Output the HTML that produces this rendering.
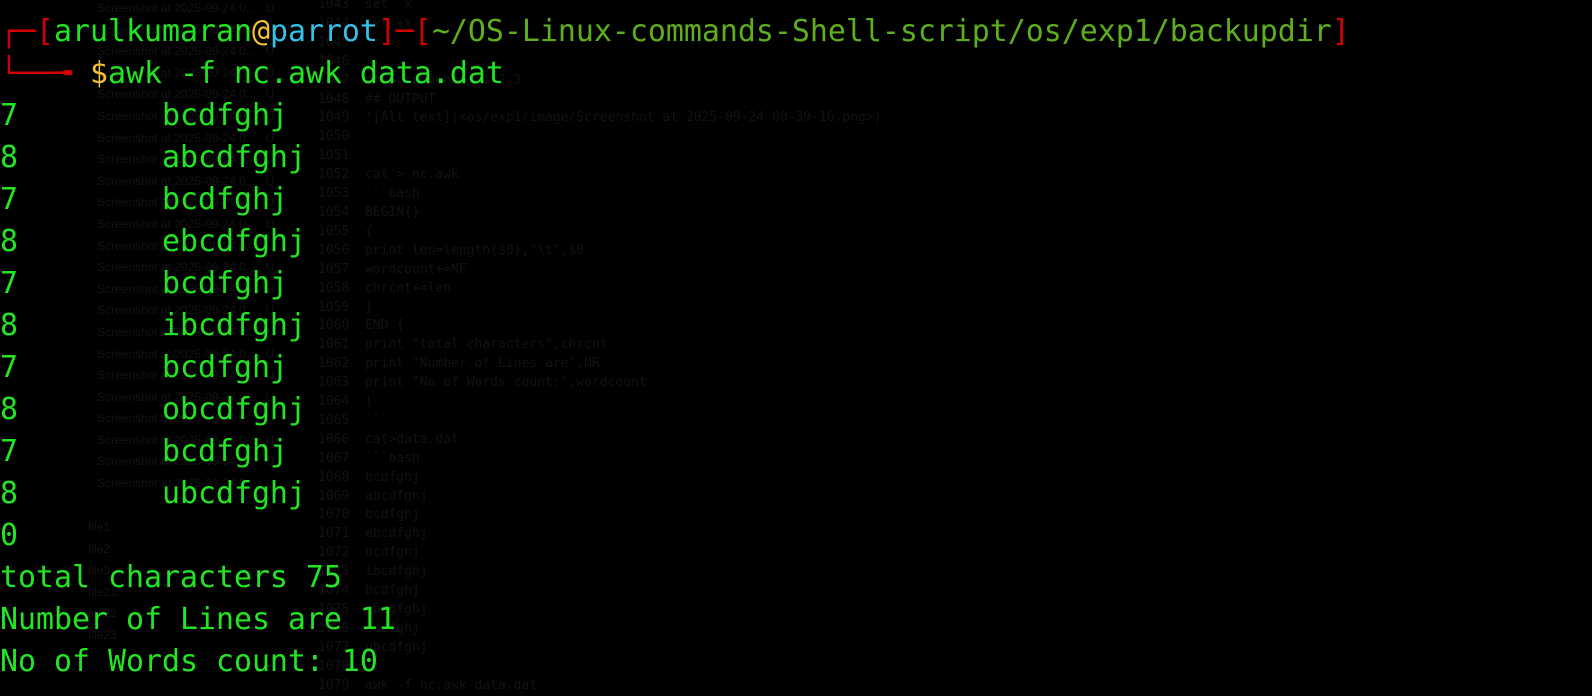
<!DOCTYPE html>
<html><head><meta charset="utf-8"><style>
html,body{margin:0;padding:0;background:#000;width:1592px;height:686px;overflow:hidden}
.bg{position:absolute;font-family:"DejaVu Sans Mono","Liberation Mono",monospace;font-size:13px;color:#121212;white-space:pre}
.fl{position:absolute;font-family:"Liberation Sans",sans-serif;font-size:12px;color:#131313;white-space:pre}
.l{position:absolute;left:0;font-family:"DejaVu Sans Mono","Liberation Mono",monospace;font-size:29.9px;line-height:38px;color:#22e622;white-space:pre}
.r{color:#d40000}.c{color:#35c2e8}.y{color:#f2c230}.p{color:#5fae1c}
</style></head><body>
<div class="fl" style="left:97px;top:-2px;line-height:21.6px">Screenshot at 2025-09-24 0...   U
Screenshot at 2025-09-24 0...   U
Screenshot at 2025-09-24 0...   U
Screenshot at 2025-09-24 0...   U
Screenshot at 2025-09-24 0...   U
Screenshot at 2025-09-24 0...   U
Screenshot at 2025-09-24 0...   U
Screenshot at 2025-09-24 0...   U
Screenshot at 2025-09-24 0...   U
Screenshot at 2025-09-24 0...   U
Screenshot at 2025-09-24 0...   U
Screenshot at 2025-09-24 0...   U
Screenshot at 2025-09-24 0...   U
Screenshot at 2025-09-24 0...   U
Screenshot at 2025-09-24 0...   U
Screenshot at 2025-09-24 0...   U
Screenshot at 2025-09-24 0...   U
Screenshot at 2025-09-24 0...   U
Screenshot at 2025-09-24 0...   U
Screenshot at 2025-09-24 0...   U
Screenshot at 2025-09-24 0...   U
Screenshot at 2025-09-24 0...   U
Screenshot at 2025-09-24 0...   U
</div>
<div class="fl" style="left:88px;top:517px;line-height:21.6px">file1
file2
file3
file21
file22
file23
</div>
<div class="bg" style="left:318px;top:-4px;line-height:18.9px">1043  set -x
1044  set +x
1045
1046
1047  ## Screenshots 1 2 3
1048  ## OUTPUT
1049  ![Alt text](&lt;os/exp1/image/Screenshot at 2025-09-24 08-39-16.png&gt;)
1050
1051
1052  cat &gt; nc.awk
1053  &#96;&#96;&#96;bash
1054  BEGIN{}
1055  {
1056  print len=length($0),"\t",$0
1057  wordcount+=NF
1058  chrcnt+=len
1059  }
1060  END {
1061  print "total characters",chrcnt
1062  print "Number of Lines are",NR
1063  print "No of Words count:",wordcount
1064  }
1065  &#96;&#96;&#96;
1066  cat&gt;data.dat
1067  &#96;&#96;&#96;bash
1068  bcdfghj
1069  abcdfghj
1070  bcdfghj
1071  ebcdfghj
1072  bcdfghj
1073  ibcdfghj
1074  bcdfghj
1075  obcdfghj
1076  bcdfghj
1077  ubcdfghj
1078  &#96;&#96;&#96;
1079  awk -f nc.awk data.dat</div>
<div class="l" style="top:12.5px"><span class="r">┌─[</span>arulkumaran<span class="y">@</span><span class="c">parrot</span><span class="r">]─[</span><span class="p">~/OS-Linux-commands-Shell-script/os/exp1/backupdir</span><span class="r">]</span></div>
<div class="l" style="top:54.5px"><span class="r">└──╼ </span><span class="y">$</span>awk -f nc.awk data.dat</div>
<div class="l" style="top:96.5px">7        bcdfghj</div>
<div class="l" style="top:138.5px">8        abcdfghj</div>
<div class="l" style="top:180.5px">7        bcdfghj</div>
<div class="l" style="top:222.5px">8        ebcdfghj</div>
<div class="l" style="top:264.5px">7        bcdfghj</div>
<div class="l" style="top:306.5px">8        ibcdfghj</div>
<div class="l" style="top:348.5px">7        bcdfghj</div>
<div class="l" style="top:390.5px">8        obcdfghj</div>
<div class="l" style="top:432.5px">7        bcdfghj</div>
<div class="l" style="top:474.5px">8        ubcdfghj</div>
<div class="l" style="top:516.5px">0</div>
<div class="l" style="top:558.5px">total characters 75</div>
<div class="l" style="top:600.5px">Number of Lines are 11</div>
<div class="l" style="top:642.5px">No of Words count: 10</div>
</body></html>
